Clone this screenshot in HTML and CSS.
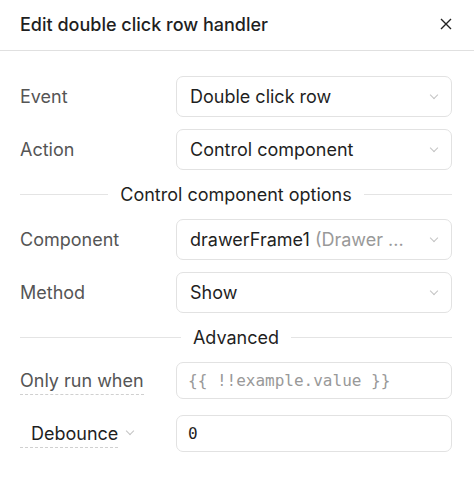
FILE: index.html
```html
<!DOCTYPE html>
<html>
	<head>
		<meta name="viewport" content="width=device-width, initial-scale=1" />
		<link rel="stylesheet" href="styles.css">
	</head>
	<body>
		<div class="header">
			<h2>Edit double click row handler</h2>
			<span class="close">
				<svg width="12" height="12" viewBox="0 0 12 12"><path d="M1 1L11 11M11 1L1 11" stroke="#222" stroke-width="1.4" /></svg>
			</span>
		</div>

		<div class="form">
			<div class="row">
				<label>Event</label>
				<div class="select"><span>Double click row</span><i class="chev"></i></div>
			</div>
			<div class="row">
				<label>Action</label>
				<div class="select"><span>Control component</span><i class="chev"></i></div>
			</div>

			<div class="divider"><span>Control component options</span></div>

			<div class="row">
				<label>Component</label>
				<div class="select"><span>drawerFrame1 <em>(Drawer ...</em></span><i class="chev"></i></div>
			</div>
			<div class="row">
				<label>Method</label>
				<div class="select"><span>Show</span><i class="chev"></i></div>
			</div>

			<div class="divider"><span>Advanced</span></div>

			<div class="row code-row">
				<label><span class="dashed">Only run when</span></label>
				<div class="code placeholder">{{ !!example.value }}</div>
			</div>
			<div class="row code-row debounce">
				<label><span class="dashed"><span class="pad">Debounce</span></span><i class="chev small"></i></label>
				<div class="code">0</div>
			</div>
		</div>
	</body>
</html>
```

FILE: styles.css
```css
body {
	margin: 0;
	background-color: #fff;
	font-family: Inter, "Noto Sans", sans-serif;
	color: #1f1f1f;
}

.header {
	display: flex;
	align-items: center;
	justify-content: space-between;
	height: 50px;
	padding: 0 22px 0 20px;
	border-bottom: 1px solid #e0e0e0;
}

.header h2 {
	margin: 0;
	font-size: 18px;
	font-weight: 500;
	padding-bottom: 2px;
}

.close { display: flex; padding-bottom: 2px; }

.form {
	display: flex;
	flex-direction: column;
	gap: 12px;
	padding: 25px 22px 0 20px;
}

.row {
	display: grid;
	grid-template-columns: 156px 1fr;
	align-items: center;
}

.row label {
	font-size: 18px;
	color: #555;
}

.select {
	height: 39px;
	border: 1px solid #e2e2e2;
	border-radius: 7px;
	display: flex;
	align-items: center;
	justify-content: space-between;
	padding: 0 14px 0 13px;
	font-size: 18px;
	color: #1f1f1f;
}

.select em {
	font-style: normal;
	color: #999;
}

.chev {
	width: 5px;
	height: 5px;
	border-right: 1.2px solid #c4c4c4;
	border-bottom: 1.2px solid #c4c4c4;
	transform: rotate(45deg);
	margin-top: -3px;
}

.divider {
	height: 25px;
	display: flex;
	align-items: center;
	gap: 12px;
	font-size: 18px;
	color: #1f1f1f;
}

.divider::before, .divider::after {
	content: "";
	flex: 1;
	border-top: 1px solid #e4e4e4;
}

.code {
	height: 35px;
	border: 1px solid #e2e2e2;
	border-radius: 7px;
	display: flex;
	align-items: center;
	padding: 0 11px;
	font-family: "DejaVu Sans Mono", monospace;
	font-size: 16px;
	color: #1f1f1f;
}

.code.placeholder { color: #999; }

.debounce { margin-top: 4px; }

.dashed {
	border-bottom: 1px dashed #d0d0d0;
	padding-bottom: 3px;
}

.pad { padding-left: 11px; color: #1f1f1f; }

.chev.small {
	display: inline-block;
	margin-left: 9px;
	vertical-align: middle;
	margin-top: -8px;
}
```
